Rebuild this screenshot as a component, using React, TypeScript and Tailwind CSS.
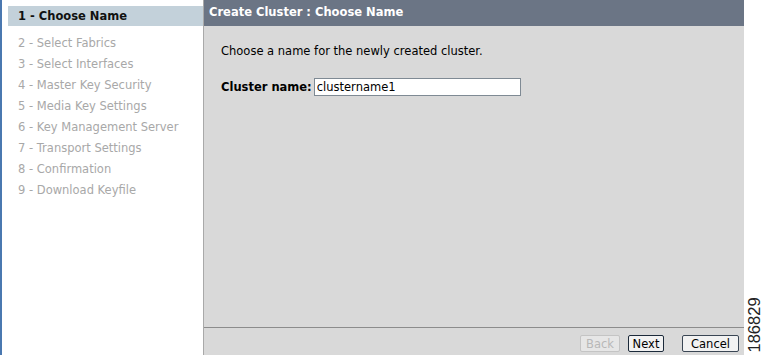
import React from 'react';

const steps = [
  '1 - Choose Name',
  '2 - Select Fabrics',
  '3 - Select Interfaces',
  '4 - Master Key Security',
  '5 - Media Key Settings',
  '6 - Key Management Server',
  '7 - Transport Settings',
  '8 - Confirmation',
  '9 - Download Keyfile',
];

export default function App() {
  return (
    <div
      className="flex h-[355px] w-[762px] bg-white text-[11.5px] text-black"
      style={{ fontFamily: '"DejaVu Sans", Verdana, sans-serif' }}
    >
      {/* Wizard steps */}
      <div className="flex w-[203px] border-l-2 border-[#4a78b0] pt-[6px] pl-[6px]">
        <ul className="w-full">
          {steps.map((s, i) =>
            i === 0 ? (
              <li key={s} className="mb-[7px] flex h-[20px] items-center bg-[#c3d1da] pt-[1px] pl-[10px] font-bold text-[#111]">
                {s}
              </li>
            ) : (
              <li key={s} className="flex h-[21px] items-center pl-[10px] text-[#a8a8a8]">
                {s}
              </li>
            )
          )}
        </ul>
      </div>

      {/* Main panel */}
      <div className="flex w-[541px] flex-col border-l border-[#a9a9a9] bg-[#d9d9d9]">
        <div className="flex h-[26px] items-center bg-[#6b7585] pl-[5px] text-[11.5px] font-bold text-white">
          Create Cluster : Choose Name
        </div>
        <div className="flex-1 px-[17px] pt-[17px]">
          <p>Choose a name for the newly created cluster.</p>
          <div className="mt-[18px] flex items-center gap-[2px]">
            <span className="font-bold">Cluster name:</span>
            <input
              readOnly
              value="clustername1"
              className="h-[18px] w-[207px] border border-[#7f8a94] bg-white px-[2px] text-[11.5px] outline-none"
            />
          </div>
        </div>
        <div className="flex h-[28px] items-start justify-end gap-[8px] border-t border-[#8c8c8c] pt-[7px] pr-[5px]">
          <button className="h-[17px] w-[40px] rounded-[2px] border border-[#c4c4c4] bg-[#e6e6e6] text-[#b8b8b8]">
            Back
          </button>
          <button className="mr-[10px] h-[17px] w-[36px] rounded-[2px] border border-[#1c2a3a] bg-[#f2f2f2]">
            Next
          </button>
          <button className="h-[17px] w-[57px] rounded-[2px] border border-[#3a4654] bg-[#f2f2f2]">
            Cancel
          </button>
        </div>
      </div>

      {/* Figure number */}
      <div className="relative flex-1">
        <span
          className="absolute bottom-[3px] left-[1px] origin-bottom-left translate-x-[17px] -rotate-90 text-[16.5px] leading-none text-[#222]"
          style={{ fontFamily: '"Liberation Sans", Arial, sans-serif' }}
        >
          186829
        </span>
      </div>
    </div>
  );
}
